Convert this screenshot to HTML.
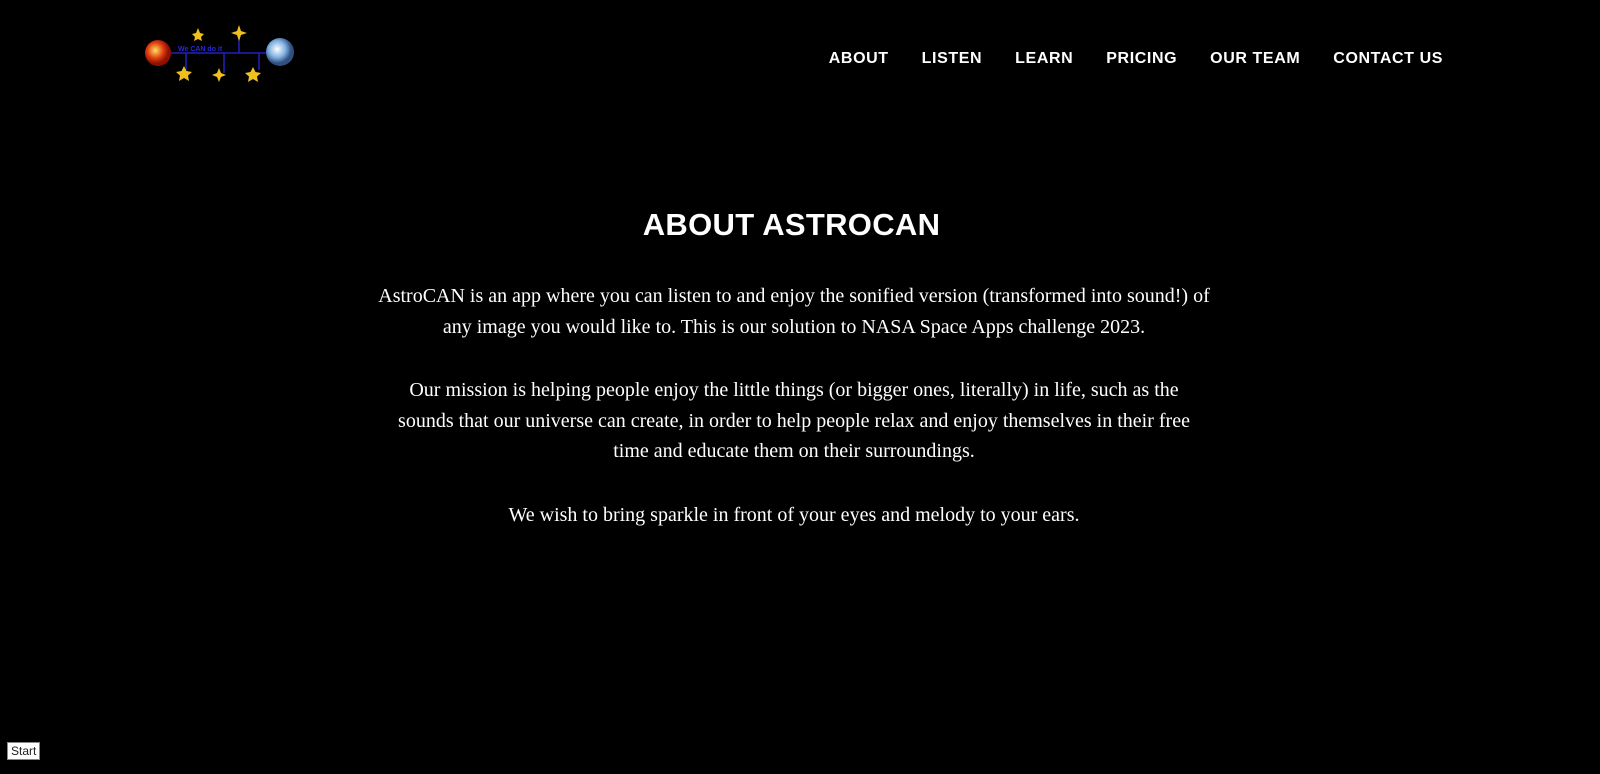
<!DOCTYPE html>
<html><head><meta charset="utf-8"><style>
html,body{margin:0;background:#000;color:#fff;height:774px;overflow:hidden}
.wrap{width:1583px;position:relative;height:774px}
nav{position:absolute;top:50px;right:140px;font-family:"Liberation Sans",sans-serif;font-weight:bold;font-size:16px;letter-spacing:.6px}
nav span{margin-left:33px}
h1{position:absolute;top:207px;left:0;width:1583px;text-align:center;margin:0;font-family:"Liberation Sans",sans-serif;font-size:31px;font-weight:bold;letter-spacing:.3px}
.txt{position:absolute;top:281px;left:341px;width:906px;text-align:center;font-family:"Liberation Serif",serif;font-size:20px;line-height:30.5px;white-space:nowrap}
.txt p{margin:0 0 33px}
.start{position:absolute;left:7px;top:742px;background:#fff;color:#222;border:1px solid #888;font-family:"Liberation Sans",sans-serif;font-size:12px;padding:1px 3px;line-height:14px}
</style></head><body><div class="wrap">
<svg style="position:absolute;left:135px;top:15px" width="175" height="75" viewBox="0 0 175 75">
<defs><radialGradient id="a" cx=".4" cy=".4"><stop offset="0" stop-color="#ffe060"/><stop offset=".6" stop-color="#e04010"/><stop offset="1" stop-color="#901000"/></radialGradient>
<radialGradient id="b" cx=".4" cy=".4"><stop offset="0" stop-color="#fff"/><stop offset=".6" stop-color="#80b0e0"/><stop offset="1" stop-color="#305080"/></radialGradient></defs>
<g stroke="#2020c0" stroke-width="1.5"><line x1="36" y1="38" x2="138" y2="38"/><line x1="51" y1="38" x2="51" y2="55"/><line x1="89" y1="38" x2="89" y2="58"/><line x1="104" y1="38" x2="104" y2="22"/><line x1="124" y1="38" x2="124" y2="55"/></g>
<text x="43" y="36" fill="#2a2ad0" font-family="Liberation Sans" font-weight="bold" font-size="7">We CAN do it</text>
<circle cx="23" cy="38" r="13" fill="url(#a)"/><circle cx="145" cy="37" r="14" fill="url(#b)"/>
<g fill="#f0c020"><polygon points="49,51 51.5,56 57,57 53,60.5 54,66 49,63 44,66 45,60.5 41,57 46.5,56"/>
<polygon points="118,52 120.5,57 126,58 122,61.5 123,67 118,64 113,67 114,61.5 110,58 115.5,57"/>
<polygon points="63,13 65,18 69,19 66,22 67,26 63,24 59,26 60,22 57,19 61,18"/>
<polygon points="104,10 106,16 112,18 106,20 104,26 102,20 96,18 102,16"/>
<polygon points="84,53 86,58 91,60 86,62 84,67 82,62 77,60 82,58"/></g></svg>
<nav><span>ABOUT</span><span>LISTEN</span><span>LEARN</span><span>PRICING</span><span>OUR TEAM</span><span>CONTACT US</span></nav>
<h1>ABOUT ASTROCAN</h1>
<div class="txt"><p>AstroCAN is an app where you can listen to and enjoy the sonified version (transformed into sound!) of<br>any image you would like to. This is our solution to NASA Space Apps challenge 2023.</p>
<p>Our mission is helping people enjoy the little things (or bigger ones, literally) in life, such as the<br>sounds that our universe can create, in order to help people relax and enjoy themselves in their free<br>time and educate them on their surroundings.</p>
<p>We wish to bring sparkle in front of your eyes and melody to your ears.</p></div>
<div class="start">Start</div>
</div></body></html>
